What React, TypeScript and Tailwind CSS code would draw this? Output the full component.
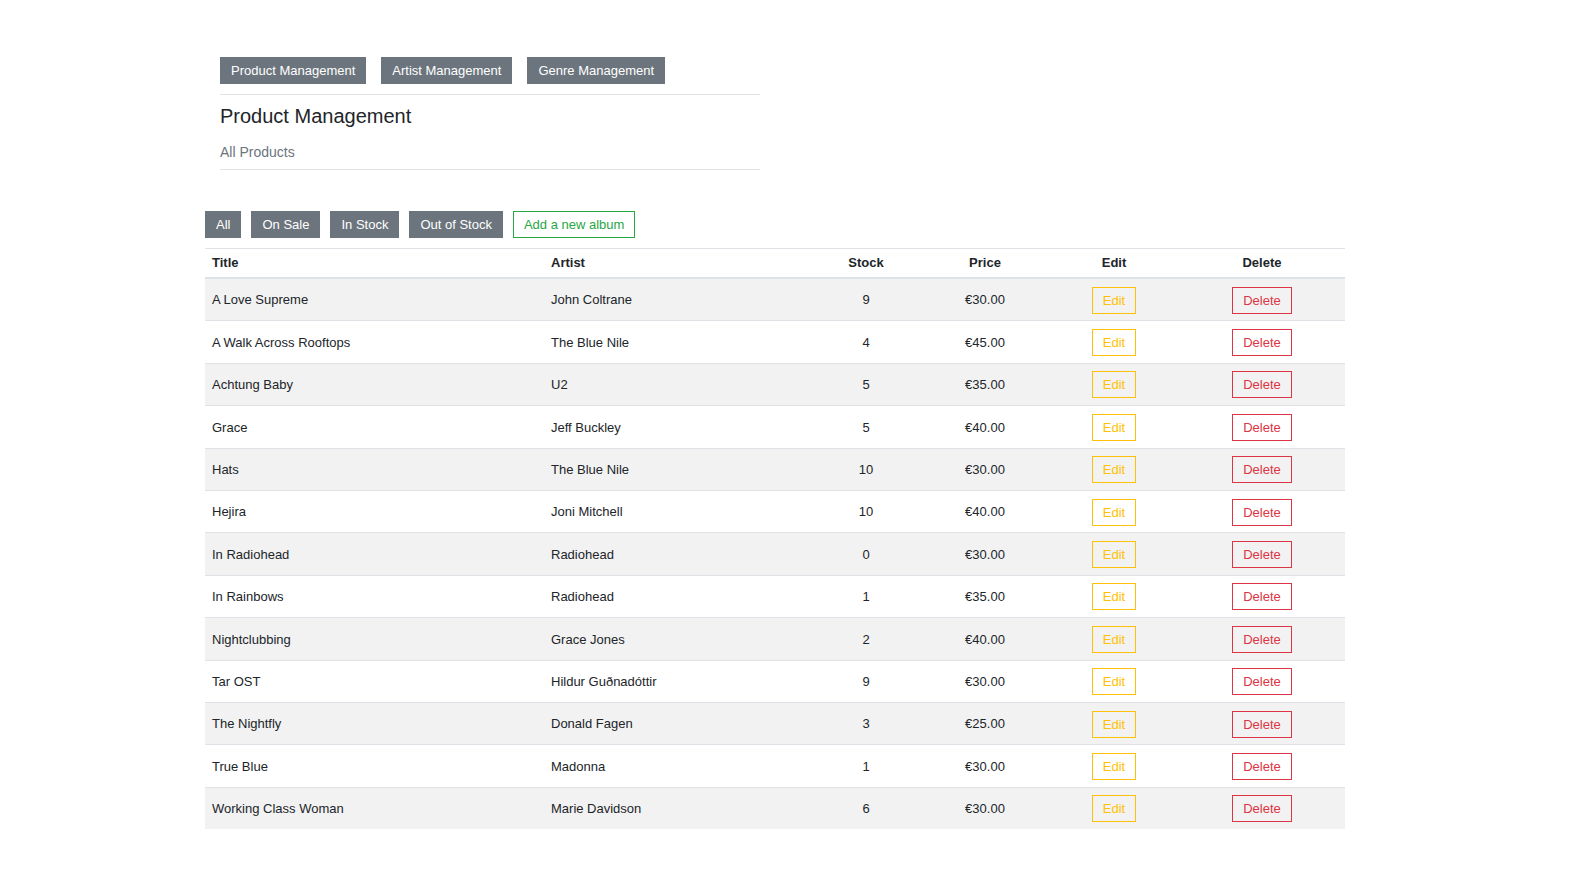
import React from "react";

const rows: [string, string, number, string][] = [
  ["A Love Supreme", "John Coltrane", 9, "€30.00"],
  ["A Walk Across Rooftops", "The Blue Nile", 4, "€45.00"],
  ["Achtung Baby", "U2", 5, "€35.00"],
  ["Grace", "Jeff Buckley", 5, "€40.00"],
  ["Hats", "The Blue Nile", 10, "€30.00"],
  ["Hejira", "Joni Mitchell", 10, "€40.00"],
  ["In Radiohead", "Radiohead", 0, "€30.00"],
  ["In Rainbows", "Radiohead", 1, "€35.00"],
  ["Nightclubbing", "Grace Jones", 2, "€40.00"],
  ["Tar OST", "Hildur Guðnadóttir", 9, "€30.00"],
  ["The Nightfly", "Donald Fagen", 3, "€25.00"],
  ["True Blue", "Madonna", 1, "€30.00"],
  ["Working Class Woman", "Marie Davidson", 6, "€30.00"],
];

const grayBtn =
  "h-[27px] px-[10px] border border-[#6c757d] bg-[#6c757d] text-white text-[13px] leading-none flex items-center";

const gridCols = "grid grid-cols-[339px_267px_110px_128px_130px_166px]";

export default function App() {
  return (
    <div
      className="min-h-screen bg-white text-[#212529]"
      style={{ fontFamily: '"Liberation Sans", Arial, Helvetica, sans-serif' }}
    >
      <div className="pt-[57px] pl-[220px] w-[760px]">
        <div className="flex gap-[15px]">
          <button className={grayBtn}>Product Management</button>
          <button className={grayBtn}>Artist Management</button>
          <button className={grayBtn}>Genre Management</button>
        </div>
        <div className="mt-[10px] border-t border-[#e3e3e3]" />
        <h1 className="mt-[9px] text-[20px] leading-[24px] font-normal">Product Management</h1>
        <p className="mt-[14px] text-[14px] leading-[21px] text-[#6c757d]">All Products</p>
        <div className="mt-[6px] border-t border-[#e3e3e3]" />
      </div>

      <div className="pl-[205px] mt-[41px]">
        <div className="flex gap-[10px]">
          <button className={grayBtn}>All</button>
          <button className={grayBtn}>On Sale</button>
          <button className={grayBtn}>In Stock</button>
          <button className={grayBtn}>Out of Stock</button>
          <button className="h-[27px] px-[10px] border border-[#28a745] text-[#28a745] text-[13px] leading-none flex items-center bg-white">
            Add a new album
          </button>
        </div>

        <div className="mt-[10px] w-[1140px] text-[13px]">
          <div className={`${gridCols} h-[31px] border-t border-b-2 border-[#dee2e6] font-bold items-center`}>
            <div className="px-[7px]">Title</div>
            <div className="px-[7px]">Artist</div>
            <div className="text-center">Stock</div>
            <div className="text-center">Price</div>
            <div className="text-center">Edit</div>
            <div className="text-center">Delete</div>
          </div>
          {rows.map((r, i) => (
            <div
              key={r[0]}
              className={`${gridCols} items-center pt-[1px] ${i === 0 ? "h-[41.4px]" : "h-[42.4px] border-t border-[#dee2e6]"} ${
                i % 2 === 0 ? "bg-[#f2f2f2]" : "bg-white"
              }`}
            >
              <div className="px-[7px]">{r[0]}</div>
              <div className="px-[7px]">{r[1]}</div>
              <div className="text-center">{r[2]}</div>
              <div className="text-center">{r[3]}</div>
              <div className="flex justify-center">
                <button className="h-[27px] px-[10px] border border-[#ffc107] text-[#ffc107] text-[13px] leading-none flex items-center">
                  Edit
                </button>
              </div>
              <div className="flex justify-center">
                <button className="h-[27px] px-[10px] border border-[#dc3545] text-[#dc3545] text-[13px] leading-none flex items-center">
                  Delete
                </button>
              </div>
            </div>
          ))}
        </div>
      </div>
    </div>
  );
}
